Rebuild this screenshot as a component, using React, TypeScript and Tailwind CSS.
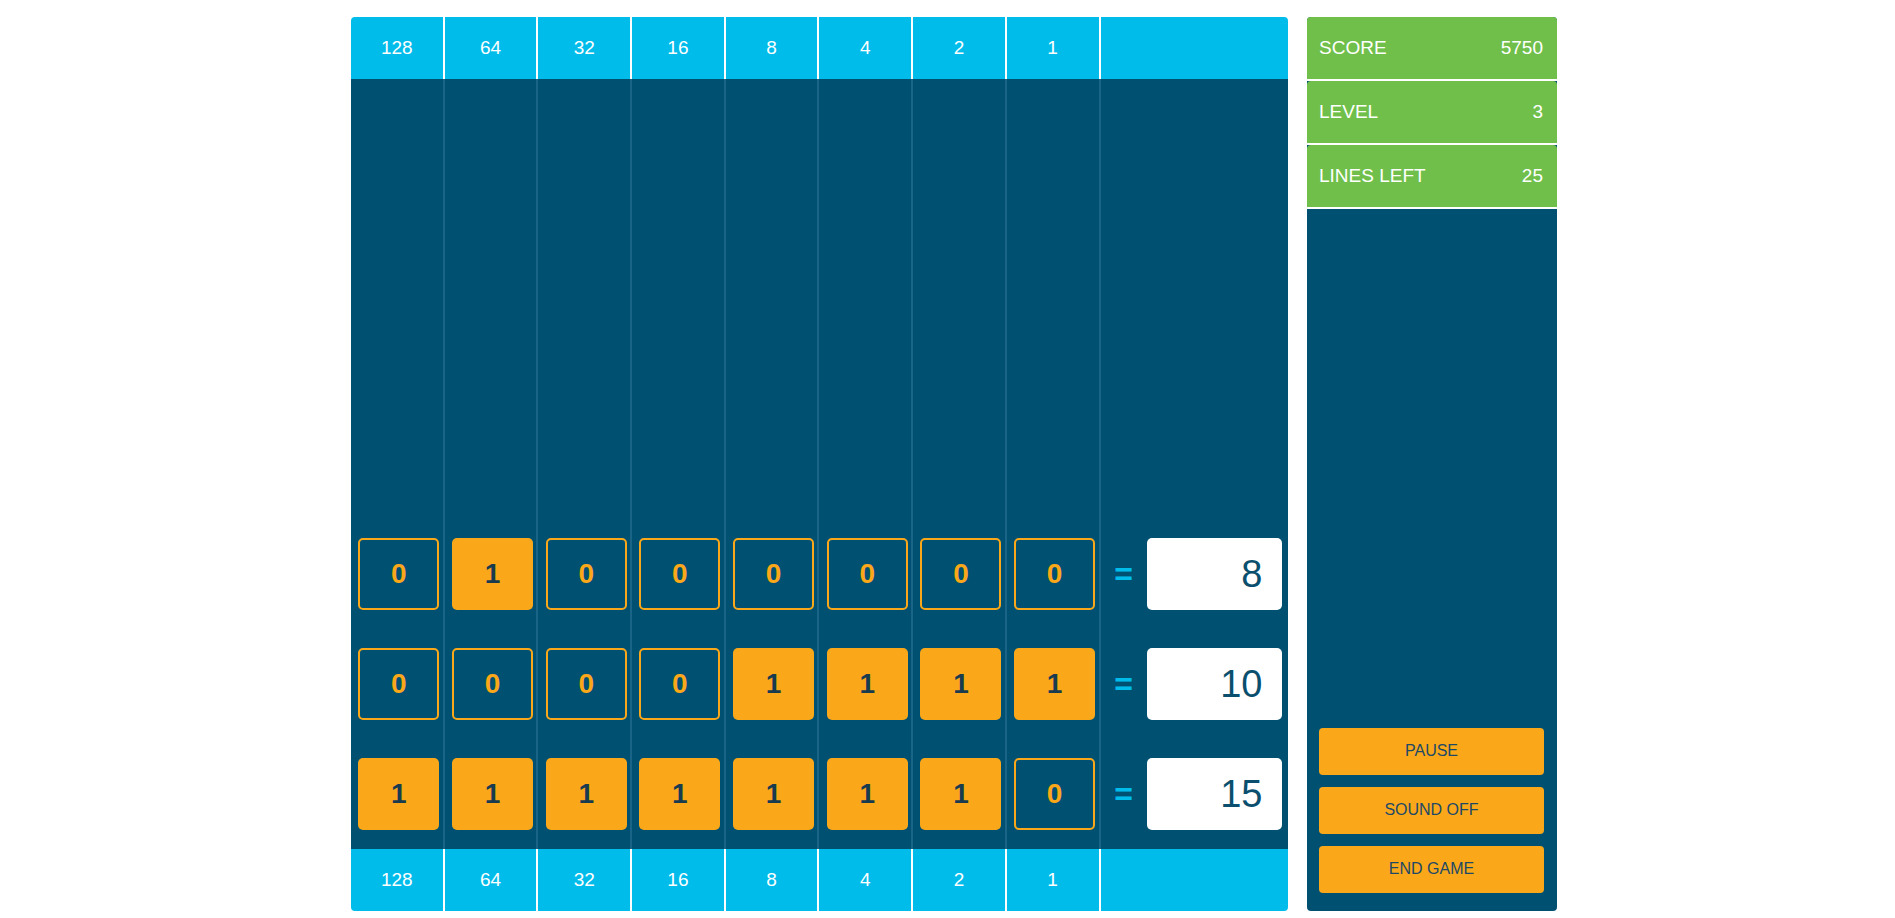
const weights = [128, 64, 32, 16, 8, 4, 2, 1];

const rows = [
  { bits: [0, 1, 0, 0, 0, 0, 0, 0], answer: 8 },
  { bits: [0, 0, 0, 0, 1, 1, 1, 1], answer: 10 },
  { bits: [1, 1, 1, 1, 1, 1, 1, 0], answer: 15 },
];

const font = { fontFamily: '"Liberation Sans", Arial, sans-serif' };

const WeightBar = ({ rounded }: { rounded: string }) => (
  <div className={`grid grid-cols-[repeat(8,10%)_20%] h-[62px] bg-[#00bceb] text-white text-[19px] ${rounded}`}>
    {weights.map((w) => (
      <div key={w} className="flex items-center justify-center border-r-2 border-white">
        {w}
      </div>
    ))}
    <div />
  </div>
);

const Tile = ({ on }: { on: number }) =>
  on ? (
    <div className="w-[81px] h-[72px] rounded-[5px] bg-[#faa819] flex items-center justify-center text-[28px] font-bold text-[#183b4f]">
      1
    </div>
  ) : (
    <div className="w-[81px] h-[72px] rounded-[5px] border-2 border-[#faa819] flex items-center justify-center text-[28px] font-bold text-[#faa819]">
      0
    </div>
  );

const Board = () => (
  <div className="w-[937px] flex flex-col">
    <WeightBar rounded="rounded-t-[4px]" />
    <div className="h-[770px] bg-[#005072] grid grid-cols-[repeat(8,10%)_20%]">
      {weights.map((w, col) => (
        <div key={w} className="border-r-2 border-[#1a6487] flex flex-col items-center justify-end gap-[38px] pb-[19px] pl-[4px]">
          {rows.map((r, i) => (
            <Tile key={i} on={r.bits[col]} />
          ))}
        </div>
      ))}
      <div className="flex flex-col justify-end gap-[38px] pb-[19px]">
        {rows.map((r, i) => (
          <div key={i} className="h-[72px] flex items-center">
            <div className="w-[46px] text-center text-[32px] font-bold text-[#00bceb] leading-none">=</div>
            <div className="w-[135px] h-[72px] bg-white rounded-[5px] flex items-center justify-end pr-[19px] text-[38px] text-[#0b4f6e]">
              {r.answer}
            </div>
          </div>
        ))}
      </div>
    </div>
    <WeightBar rounded="rounded-b-[4px]" />
  </div>
);

const Stat = ({ label, value }: { label: string; value: string }) => (
  <div className="h-[64px] bg-[#6fbf4a] rounded-t-[4px] border-b-2 border-white flex items-center justify-between pl-3 pr-[14px] text-white text-[19px]">
    <span>{label}</span>
    <span>{value}</span>
  </div>
);

const SidePanel = () => (
  <div className="w-[250px] h-[894px] bg-[#005072] rounded-[4px] flex flex-col">
    <Stat label="SCORE" value="5750" />
    <Stat label="LEVEL" value="3" />
    <Stat label="LINES LEFT" value="25" />
    <div className="flex-1" />
    <div className="flex flex-col gap-3 pl-3 pr-[13px] pb-[18px]">
      {['PAUSE', 'SOUND OFF', 'END GAME'].map((b) => (
        <button key={b} className="h-[47px] rounded-[4px] bg-[#faa819] text-[#1d4866] text-[16px] pb-[2px]">
          {b}
        </button>
      ))}
    </div>
  </div>
);

export default function App() {
  return (
    <div className="min-h-screen bg-white" style={font}>
      <div className="w-[1219px] mx-auto pt-[17px] pl-[13px] flex gap-[19px]">
        <Board />
        <SidePanel />
      </div>
    </div>
  );
}
